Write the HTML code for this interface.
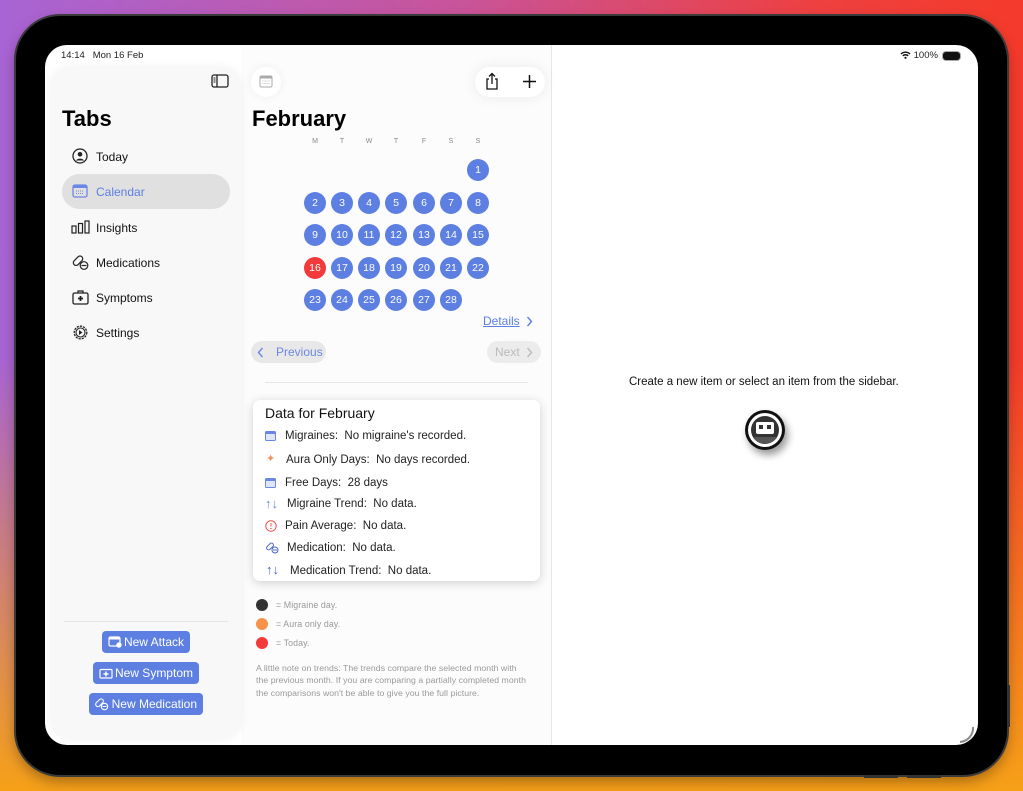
<!DOCTYPE html>
<html><head><meta charset="utf-8"><style>
*{margin:0;padding:0;box-sizing:border-box}
body{width:1023px;height:791px;overflow:hidden;position:relative;font-family:"Liberation Sans",sans-serif;
background:linear-gradient(180deg,rgba(0,0,0,0) 0%,rgba(0,0,0,0) 45%,#f6a018 100%),linear-gradient(90deg,#a864d4 0%,#c8549a 45%,#ee4040 80%,#f43a2a 100%);}
.abs{position:absolute}
.dev{left:16px;top:16px;width:991px;height:759px;border-radius:44px;background:#000;box-shadow:0 0 0 2px #3a3a3a,0 6px 14px rgba(0,0,0,.35)}
.scr{left:45px;top:45px;width:933px;height:700px;border-radius:22px;background:#fff;overflow:hidden}
.sb{left:6px;top:22px;width:190px;height:672px;border-radius:20px;background:#f8f8f8;box-shadow:0 0 10px rgba(0,0,0,.06)}
.mid{left:196px;top:0;width:310px;height:700px;background:#fcfcfc}
.t{font-size:12px;color:#111}
.nav{left:24px;font-size:12px;color:#111}
.ic{left:27px}
.day{width:22px;height:22px;border-radius:50%;background:#5c7fe1;color:#fff;font-size:10.5px;line-height:22px;text-align:center}
.dow{font-size:7px;color:#888;width:22px;text-align:center}
.btn{background:#5c7fe1;color:#fff;font-size:12px;border-radius:4px;height:22px;line-height:22px}
.row{left:12px;font-size:11.5px;color:#222}
.leg{font-size:8.8px;color:#999;letter-spacing:.1px}
</style></head><body>
<div class="abs dev"></div>
<div class="abs" style="left:1007px;top:685px;width:3px;height:42px;background:#333"></div>
<div class="abs" style="left:864px;top:775px;width:34px;height:3px;background:#333"></div>
<div class="abs" style="left:907px;top:775px;width:34px;height:3px;background:#333"></div>
<div class="abs scr">
  <div class="abs t" style="left:16px;top:5px;font-size:9.5px;color:#222">14:14&nbsp;&nbsp; Mon 16 Feb</div>
  <div class="abs" style="left:855px;top:5px;font-size:9.5px;color:#222"><svg width="11" height="8" viewBox="0 0 11 8" style="vertical-align:-1px"><path d="M1 3a6.5 6.5 0 0 1 9 0M2.8 4.8a4 4 0 0 1 5.4 0" stroke="#111" stroke-width="1.4" fill="none"/><circle cx="5.5" cy="6.8" r="1.1" fill="#111"/></svg> 100%</div>
  <div class="abs" style="left:898px;top:7px;width:17px;height:8px;border-radius:3px;background:#111;box-shadow:0 0 0 1px #aaa"></div>
  <div class="abs" style="left:506px;top:0;width:1px;height:700px;background:#e6e6e6"></div>
  <div class="abs mid"></div>
  <div class="abs sb"></div>
  <svg class="abs" style="left:166px;top:29px" width="18" height="14" viewBox="0 0 18 14"><rect x="1" y="1" width="16" height="12" rx="2" fill="none" stroke="#222" stroke-width="1.3"/><line x1="6" y1="1" x2="6" y2="13" stroke="#222" stroke-width="1.3"/><path d="M2.5 4h2M2.5 6h2M2.5 8h2" stroke="#222" stroke-width="1"/></svg>
  <div class="abs" style="left:17px;top:61px;font-size:22px;font-weight:bold;color:#000">Tabs</div>
  <div class="abs" style="left:17px;top:129px;width:168px;height:35px;border-radius:18px;background:#e0e0e0"></div>
  <svg class="abs ic" style="top:103px" width="16" height="16"><circle cx="8" cy="8" r="7" fill="none" stroke="#222" stroke-width="1.3"/><circle cx="8" cy="6.3" r="2.3" fill="#222"/><path d="M3.8 12.5a5 4 0 0 1 8.4 0" fill="#222"/></svg>
  <div class="abs nav" style="left:51px;top:105px">Today</div>
  <svg class="abs ic" style="top:139px" width="16" height="14"><rect x="1" y="1" width="14" height="12" rx="2" fill="none" stroke="#6b87e3" stroke-width="1.3"/><rect x="1" y="1" width="14" height="3" fill="#6b87e3"/><path d="M4 7h8M4 9.5h8" stroke="#6b87e3" stroke-dasharray="1 1"/></svg>
  <div class="abs nav" style="left:51px;top:140px;color:#5c7fe1">Calendar</div>
  <svg class="abs" style="left:26px;top:175px" width="20" height="14"><rect x="1" y="6" width="4" height="7" fill="none" stroke="#222" stroke-width="1.2"/><rect x="7.5" y="3.5" width="4" height="9.5" fill="none" stroke="#222" stroke-width="1.2"/><rect x="14" y="1" width="4" height="12" fill="none" stroke="#222" stroke-width="1.2"/></svg>
  <div class="abs nav" style="left:51px;top:176px">Insights</div>
  <svg class="abs" style="left:26px;top:209px" width="18" height="16"><rect x="1.5" y="4" width="11" height="5.5" rx="2.7" transform="rotate(-45 7 6.7)" fill="none" stroke="#222" stroke-width="1.2"/><circle cx="13" cy="11.5" r="3.8" fill="#f8f8f8" stroke="#222" stroke-width="1.2"/><line x1="10.5" y1="11.5" x2="15.5" y2="11.5" stroke="#222" stroke-width="1.2"/></svg>
  <div class="abs nav" style="left:51px;top:211px">Medications</div>
  <svg class="abs ic" style="top:245px" width="17" height="15"><rect x="1" y="3" width="15" height="11" rx="1.5" fill="none" stroke="#222" stroke-width="1.3"/><path d="M6 3V1h5v2" fill="none" stroke="#222" stroke-width="1.2"/><path d="M8.5 6v5M6 8.5h5" stroke="#222" stroke-width="1.8"/></svg>
  <div class="abs nav" style="left:51px;top:246px">Symptoms</div>
  <svg class="abs ic" style="top:279px" width="17" height="17"><circle cx="8.5" cy="8.5" r="6.3" fill="none" stroke="#222" stroke-width="1.3" stroke-dasharray="2.2 1"/><circle cx="8.5" cy="8.5" r="4.5" fill="none" stroke="#222" stroke-width="1.1"/><path d="M7 6l3.5 2.5L7 11z" fill="#222"/></svg>
  <div class="abs nav" style="left:51px;top:281px">Settings</div>
  <div class="abs" style="left:19px;top:576px;width:164px;height:1px;background:#e5e5e5"></div>
  <div class="abs btn" style="left:57px;top:586px;width:88px;text-align:right;padding-right:6px"><svg class="abs" style="left:6px;top:5px" width="14" height="12"><rect x="1" y="1" width="11" height="9" rx="1.5" fill="none" stroke="#fff" stroke-width="1.2"/><rect x="1" y="1" width="11" height="2.5" fill="#fff"/><circle cx="11" cy="9" r="2.7" fill="#fff"/></svg>New Attack</div>
  <div class="abs btn" style="left:48px;top:617px;width:106px;text-align:right;padding-right:6px"><svg class="abs" style="left:6px;top:5px" width="14" height="12"><rect x="1" y="2.5" width="12" height="8.5" rx="1" fill="none" stroke="#fff" stroke-width="1.2"/><path d="M7 4.5v5M4.5 7h5" stroke="#fff" stroke-width="1.5"/></svg>New Symptom</div>
  <div class="abs btn" style="left:44px;top:648px;width:114px;text-align:right;padding-right:6px"><svg class="abs" style="left:5px;top:4px" width="15" height="14"><rect x="1" y="3.5" width="9" height="4.5" rx="2.2" transform="rotate(-45 5.5 5.7)" fill="none" stroke="#fff" stroke-width="1.1"/><circle cx="10.5" cy="9.5" r="3.2" fill="none" stroke="#fff" stroke-width="1.1"/><line x1="8.5" y1="9.5" x2="12.5" y2="9.5" stroke="#fff"/></svg>New Medication</div>

  <div class="abs" style="left:206px;top:22px;width:30px;height:30px;border-radius:50%;background:#fff;box-shadow:0 0 10px rgba(0,0,0,.06)"></div>
  <svg class="abs" style="left:214px;top:30px" width="14" height="13"><rect x="1" y="1" width="12" height="11" rx="1.5" fill="none" stroke="#aaa"/><rect x="1" y="1" width="12" height="2.5" fill="#aaa"/><path d="M3.5 6h7M3.5 8.5h7" stroke="#bbb" stroke-dasharray="1 1"/></svg>
  <div class="abs" style="left:430px;top:22px;width:70px;height:30px;border-radius:15px;background:#fff;box-shadow:0 0 14px rgba(0,0,0,.08)"></div>
  <svg class="abs" style="left:440px;top:27px" width="14" height="18"><path d="M4 7H2v10h10V7h-2M7 12V1.5M4 4.5l3-3 3 3" fill="none" stroke="#111" stroke-width="1.3"/></svg>
  <svg class="abs" style="left:478px;top:30px" width="13" height="13"><path d="M6.5 0v13M0 6.5h13" stroke="#111" stroke-width="1.5"/></svg>
  <div class="abs" style="left:207px;top:61px;font-size:22px;font-weight:bold;color:#000">February</div>
  <div class="abs" style="left:259px;top:93px">
    <div class="abs dow" style="left:0">M</div><div class="abs dow" style="left:27px">T</div><div class="abs dow" style="left:54px">W</div><div class="abs dow" style="left:81px">T</div><div class="abs dow" style="left:109px">F</div><div class="abs dow" style="left:136px">S</div><div class="abs dow" style="left:163px">S</div>
  </div>
  <div class="abs" style="left:259px;top:114px">
    <div class="abs day" style="left:163px;top:0">1</div>
    <div class="abs day" style="left:0;top:33px">2</div><div class="abs day" style="left:27px;top:33px">3</div><div class="abs day" style="left:54px;top:33px">4</div><div class="abs day" style="left:81px;top:33px">5</div><div class="abs day" style="left:109px;top:33px">6</div><div class="abs day" style="left:136px;top:33px">7</div><div class="abs day" style="left:163px;top:33px">8</div>
    <div class="abs day" style="left:0;top:65px">9</div><div class="abs day" style="left:27px;top:65px">10</div><div class="abs day" style="left:54px;top:65px">11</div><div class="abs day" style="left:81px;top:65px">12</div><div class="abs day" style="left:109px;top:65px">13</div><div class="abs day" style="left:136px;top:65px">14</div><div class="abs day" style="left:163px;top:65px">15</div>
    <div class="abs day" style="left:0;top:98px;background:#f23a3a">16</div><div class="abs day" style="left:27px;top:98px">17</div><div class="abs day" style="left:54px;top:98px">18</div><div class="abs day" style="left:81px;top:98px">19</div><div class="abs day" style="left:109px;top:98px">20</div><div class="abs day" style="left:136px;top:98px">21</div><div class="abs day" style="left:163px;top:98px">22</div>
    <div class="abs day" style="left:0;top:130px">23</div><div class="abs day" style="left:27px;top:130px">24</div><div class="abs day" style="left:54px;top:130px">25</div><div class="abs day" style="left:81px;top:130px">26</div><div class="abs day" style="left:109px;top:130px">27</div><div class="abs day" style="left:136px;top:130px">28</div>
  </div>
  <div class="abs" style="left:438px;top:269px;font-size:12px;color:#5c7fe1;text-decoration:underline">Details</div>
  <svg class="abs" style="left:481px;top:271px" width="7" height="11"><path d="M1.5 1l4 4.5-4 4.5" fill="none" stroke="#5c7fe1" stroke-width="1.4"/></svg>
  <div class="abs" style="left:206px;top:296px;width:75px;height:22px;border-radius:11px;background:#e8e8e8;color:#6b87e3;font-size:12px;line-height:22px;padding-left:25px">Previous</div>
  <svg class="abs" style="left:212px;top:302px" width="7" height="11"><path d="M5.5 1l-4 4.5 4 4.5" fill="none" stroke="#6b87e3" stroke-width="1.4"/></svg>
  <div class="abs" style="left:442px;top:296px;width:54px;height:22px;border-radius:11px;background:#ececec;color:#bbb;font-size:12px;line-height:22px;padding-left:8px">Next</div>
  <svg class="abs" style="left:481px;top:302px" width="7" height="11"><path d="M1.5 1l4 4.5-4 4.5" fill="none" stroke="#bbb" stroke-width="1.4"/></svg>
  <div class="abs" style="left:220px;top:337px;width:263px;height:1px;background:#e5e5e5"></div>
  <div class="abs" style="left:208px;top:355px;width:287px;height:181px;border-radius:7px;background:#fff;box-shadow:0 2px 10px rgba(0,0,0,.18)">
    <div class="abs" style="left:12px;top:5px;font-size:14px;color:#111">Data for February</div>
    <svg class="abs" style="left:12px;top:31px" width="11" height="10"><rect x=".5" y=".5" width="10" height="9" rx="1" fill="#dfe6fb" stroke="#6b87e3"/><rect x=".5" y=".5" width="10" height="2.5" fill="#6b87e3"/></svg>
    <div class="abs row" style="left:32px;top:30px">Migraines:&nbsp; No migraine's recorded.</div>
    <div class="abs" style="left:13px;top:52px;color:#f59060;font-size:11px">&#x2726;</div>
    <div class="abs row" style="left:33px;top:54px">Aura Only Days:&nbsp; No days recorded.</div>
    <svg class="abs" style="left:12px;top:78px" width="11" height="10"><rect x=".5" y=".5" width="10" height="9" rx="1" fill="#dfe6fb" stroke="#6b87e3"/><rect x=".5" y=".5" width="10" height="2.5" fill="#6b87e3"/></svg>
    <div class="abs row" style="left:32px;top:77px">Free Days:&nbsp; 28 days</div>
    <div class="abs" style="left:12px;top:96px;color:#6b87e3;font-size:13px">&#x2191;&#x2193;</div>
    <div class="abs row" style="left:34px;top:98px">Migraine Trend:&nbsp; No data.</div>
    <svg class="abs" style="left:12px;top:120px" width="12" height="12"><circle cx="6" cy="6" r="5.2" fill="none" stroke="#f05050"/><path d="M6 3v3.5" stroke="#f05050"/><circle cx="6" cy="8.6" r=".7" fill="#f05050"/></svg>
    <div class="abs row" style="left:32px;top:120px">Pain Average:&nbsp; No data.</div>
    <svg class="abs" style="left:12px;top:141px" width="14" height="13"><rect x="1" y="3.5" width="8" height="4" rx="2" transform="rotate(-45 5 5.5)" fill="none" stroke="#4a64c8"/><circle cx="10" cy="9" r="3" fill="#fff" stroke="#4a64c8"/><line x1="8" y1="9" x2="12" y2="9" stroke="#4a64c8"/></svg>
    <div class="abs row" style="left:34px;top:142px">Medication:&nbsp; No data.</div>
    <div class="abs" style="left:13px;top:162px;color:#4a64c8;font-size:13px">&#x2191;&#x2193;</div>
    <div class="abs row" style="left:37px;top:165px">Medication Trend:&nbsp; No data.</div>
  </div>
  <div class="abs" style="left:211px;top:554px;width:12px;height:12px;border-radius:50%;background:#333"></div>
  <div class="abs leg" style="left:231px;top:555px">= Migraine day.</div>
  <div class="abs" style="left:211px;top:573px;width:12px;height:12px;border-radius:50%;background:#f7924a"></div>
  <div class="abs leg" style="left:231px;top:574px">= Aura only day.</div>
  <div class="abs" style="left:211px;top:592px;width:12px;height:12px;border-radius:50%;background:#f23a3a"></div>
  <div class="abs leg" style="left:231px;top:593px">= Today.</div>
  <div class="abs leg" style="left:211px;top:617px;width:292px;line-height:12.3px;font-size:8.7px;letter-spacing:.05px;white-space:nowrap">A little note on trends: The trends compare the selected month with<br>the previous month. If you are comparing a partially completed month<br>the comparisons won't be able to give you the full picture.</div>
  <div class="abs" style="left:584px;top:331px;font-size:11.5px;color:#111">Create a new item or select an item from the sidebar.</div>
  <div class="abs" style="left:700px;top:365px;width:40px;height:40px;border-radius:50%;background:#111;box-shadow:3px 5px 8px rgba(0,0,0,.4)"></div>
  <div class="abs" style="left:703px;top:368px;width:34px;height:34px;border-radius:50%;background:#fff"></div>
  <div class="abs" style="left:706px;top:371px;width:28px;height:28px;border-radius:50%;background:#333;overflow:hidden">
    <div class="abs" style="left:5px;top:6px;width:18px;height:12px;background:#fff;border-radius:2px"></div>
    <div class="abs" style="left:8px;top:9px;width:4px;height:4px;background:#333"></div>
    <div class="abs" style="left:16px;top:9px;width:4px;height:4px;background:#333"></div>
    <div class="abs" style="left:0;top:21px;width:28px;height:8px;background:#555"></div>
  </div>
  <svg class="abs" style="left:912px;top:680px" width="20" height="20"><path d="M16 2a14 14 0 0 1-13 15" fill="none" stroke="#888" stroke-width="2"/></svg>
</div>
</body></html>
